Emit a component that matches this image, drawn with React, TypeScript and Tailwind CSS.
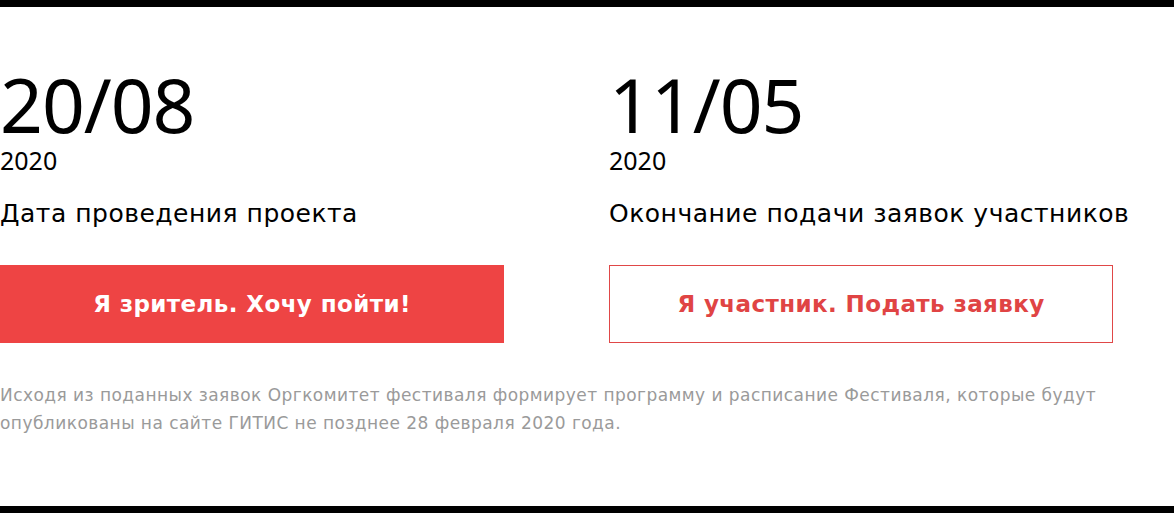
import React from "react";

const DateBlock: React.FC<{ day: string; year: string; label: string }> = ({ day, year, label }) => {
  return (
    <div className="flex flex-col">
      <div className="font-['Noto_Sans',sans-serif] text-[75px] leading-none text-black tracking-[-1px]">{day}</div>
      <div className="mt-[6px] font-['Noto_Sans',sans-serif] text-[25px] leading-none text-black">{year}</div>
      <div className="mt-[28px] text-[25px] leading-none tracking-[0.5px] whitespace-nowrap text-black">{label}</div>
    </div>
  );
};

const App: React.FC = () => {
  return (
    <div className="w-[1174px] h-[513px] bg-white flex flex-col font-['DejaVu_Sans',sans-serif] overflow-hidden">
      <div className="h-[7px] bg-black w-full" />

      <div className="flex-1 flex flex-col pt-[60px]">
        <div className="grid grid-cols-[504px_504px] gap-x-[105px]">
          <DateBlock day="20/08" year="2020" label="Дата проведения проекта" />
          <DateBlock day="11/05" year="2020" label="Окончание подачи заявок участников" />

          <button className="mt-[39px] h-[78px] bg-[#ee4444] text-white text-[23px] tracking-[0.4px] font-bold flex items-center justify-center">
            Я зритель. Хочу пойти!
          </button>
          <button className="mt-[39px] h-[78px] border border-[#e04848] bg-white text-[#e04444] text-[23px] tracking-[0.4px] font-bold flex items-center justify-center">
            Я участник. Подать заявку
          </button>
        </div>

        <p className="mt-[38px] w-[1140px] text-[17px] leading-[28px] tracking-[0.45px] text-[#9a9a9a]">
          Исходя из поданных заявок Оргкомитет фестиваля формирует программу и расписание Фестиваля, которые будут
          <br />
          опубликованы на сайте ГИТИС не позднее 28 февраля 2020 года.
        </p>
      </div>

      <div className="h-[7px] bg-black w-full" />
    </div>
  );
};

export default App;
